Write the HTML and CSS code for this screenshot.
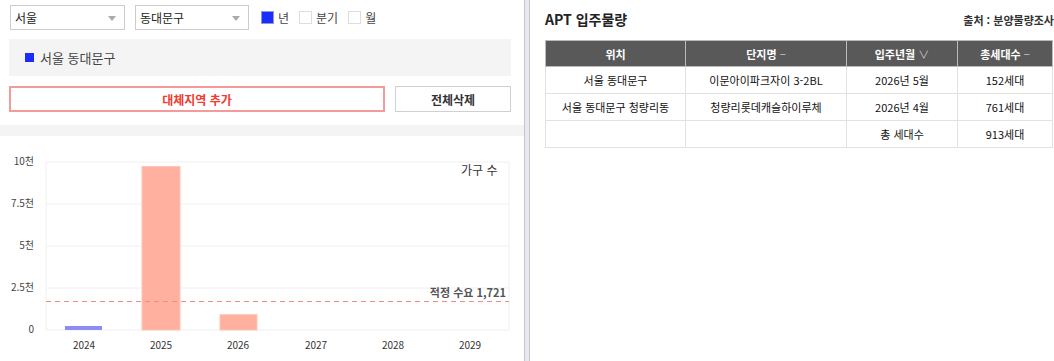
FILE: index.html
```html
<!DOCTYPE html>
<html lang="ko">
<head>
    <meta charset="UTF-8">
    <meta name="viewport" content="width=device-width, initial-scale=1.0">
    <title>APT 입주물량</title>
    <link rel="stylesheet" href="styles.css">
</head>
<body>
<div class="page">
    <section class="left-panel">
        <div class="filters">
            <div class="select select-city">서울<span class="caret"></span></div>
            <div class="select select-gu">동대문구<span class="caret"></span></div>
            <label class="check checked"><span class="box"></span>년</label>
            <label class="check"><span class="box"></span>분기</label>
            <label class="check"><span class="box"></span>월</label>
        </div>

        <div class="legend">
            <span class="swatch"></span>서울 동대문구
        </div>

        <div class="actions">
            <button type="button" class="btn-add">대체지역 추가</button>
            <button type="button" class="btn-clear">전체삭제</button>
        </div>

        <div class="band"></div>

        <div class="chart">
            <svg width="524" height="225" viewBox="0 0 524 225">
                <g class="grid">
                    <line x1="46" y1="26" x2="509" y2="26"/>
                    <line x1="46" y1="68" x2="509" y2="68"/>
                    <line x1="46" y1="110" x2="509" y2="110"/>
                    <line x1="46" y1="152" x2="509" y2="152"/>
                    <line x1="46" y1="194" x2="509" y2="194"/>
                    <line x1="46" y1="26" x2="46" y2="194"/>
                    <line x1="509" y1="26" x2="509" y2="194"/>
                </g>
                <g class="y-labels">
                    <text x="34" y="26">10천</text>
                    <text x="34" y="68">7.5천</text>
                    <text x="34" y="110">5천</text>
                    <text x="34" y="152">2.5천</text>
                    <text x="34" y="194">0</text>
                </g>
                <rect class="bar-past" x="65" y="190" width="37" height="4"/>
                <rect class="bar" x="142" y="30.5" width="38" height="163.5"/>
                <rect class="bar" x="220" y="178.7" width="37" height="15.3"/>
                <line class="need-line" x1="46" y1="165.5" x2="509" y2="165.5"/>
                <text class="need-label" x="506" y="158">적정 수요 1,721</text>
                <text class="series-label" x="461" y="36">가구 수</text>
                <g class="x-labels">
                    <text x="84" y="210">2024</text>
                    <text x="161" y="210">2025</text>
                    <text x="238" y="210">2026</text>
                    <text x="316" y="210">2027</text>
                    <text x="393" y="210">2028</text>
                    <text x="470" y="210">2029</text>
                </g>
            </svg>
        </div>
    </section>

    <div class="splitter"></div>

    <section class="right-panel">
        <div class="panel-head">
            <h2 class="title">APT 입주물량</h2>
            <span class="source">출처 : 분양물량조사</span>
        </div>
        <table class="supply">
            <colgroup>
                <col class="c-loc">
                <col class="c-name">
                <col class="c-date">
                <col class="c-units">
            </colgroup>
            <thead>
                <tr>
                    <th>위치</th>
                    <th>단지명 <span class="sort">−</span></th>
                    <th>입주년월 <span class="sort">∨</span></th>
                    <th>총세대수 <span class="sort">−</span></th>
                </tr>
            </thead>
            <tbody>
                <tr>
                    <td>서울 동대문구</td>
                    <td>이문아이파크자이 3-2BL</td>
                    <td>2026년 5월</td>
                    <td>152세대</td>
                </tr>
                <tr>
                    <td>서울 동대문구 청량리동</td>
                    <td>청량리롯데캐슬하이루체</td>
                    <td>2026년 4월</td>
                    <td>761세대</td>
                </tr>
                <tr>
                    <td></td>
                    <td></td>
                    <td>총 세대수</td>
                    <td>913세대</td>
                </tr>
            </tbody>
        </table>
    </section>
</div>
</body>
</html>
```

FILE: styles.css
```css
body {
    margin: 0;
    background-color: #fff;
    font-family: "Noto Sans CJK KR", "Noto Sans", sans-serif;
    color: #333;
}

.page {
    display: flex;
    width: 1054px;
    height: 361px;
    overflow: hidden;
}

/* left side */
.left-panel {
    width: 524px;
    flex: none;
}

.filters {
    display: flex;
    align-items: center;
    height: 25px;
    padding: 5px 0 0 10px;
}

.select {
    position: relative;
    box-sizing: border-box;
    height: 25px;
    padding-left: 4px;
    border: 1px solid #ccc;
    font-size: 12px;
    line-height: 23px;
    color: #222;
}

.select-city {
    width: 115px;
    margin-right: 10px;
}

.select-gu {
    width: 114px;
    margin-right: 12px;
}

.caret {
    position: absolute;
    right: 8px;
    top: 10px;
    border-left: 4px solid transparent;
    border-right: 4px solid transparent;
    border-top: 5px solid #aaa;
}

.check {
    display: flex;
    align-items: center;
    margin-right: 10px;
    font-size: 12px;
    color: #444;
}

.check .box {
    box-sizing: border-box;
    width: 13px;
    height: 13px;
    margin-right: 4px;
    border: 1px solid #ddd;
    background-color: #fff;
}

.check.checked .box {
    border-color: #8d98d8;
    background-color: #1a2cff;
}

.legend {
    display: flex;
    align-items: center;
    height: 37px;
    margin: 9px 13px 0 9px;
    padding-left: 16px;
    background-color: #f4f4f4;
    font-size: 13px;
    color: #444;
}

.swatch {
    width: 9px;
    height: 9px;
    margin-right: 6px;
    background-color: #1a2cff;
}

.actions {
    display: flex;
    gap: 10px;
    margin: 10px 13px 0 9px;
}

.actions button {
    height: 26px;
    padding: 0;
    background-color: #fff;
    font-family: inherit;
    font-size: 12px;
    font-weight: bold;
    cursor: pointer;
}

.btn-add {
    width: 376px;
    border: 2px solid #f59a9a;
    color: #f03a32;
}

.btn-clear {
    flex: 1;
    border: 1px solid #d0d0d0;
    color: #333;
}

.band {
    height: 11px;
    margin-top: 13px;
    background-color: #f4f4f4;
}

.chart svg {
    display: block;
}

.grid line {
    stroke: #f0f0f0;
    stroke-width: 1;
}

.y-labels text {
    font-size: 10px;
    fill: #444;
    text-anchor: end;
    dominant-baseline: middle;
}

.x-labels text {
    font-size: 10px;
    fill: #333;
    text-anchor: middle;
    dominant-baseline: middle;
}

.bar {
    fill: #ffb09f;
    stroke: #ffc4b8;
    stroke-width: 1;
}

.bar-past {
    fill: #8c8cf5;
}

.need-line {
    stroke: #f28a8a;
    stroke-width: 1;
    stroke-dasharray: 5 4;
}

.need-label {
    font-size: 11px;
    font-weight: bold;
    fill: #555;
    text-anchor: end;
    dominant-baseline: middle;
}

.series-label {
    font-size: 12px;
    fill: #333;
    dominant-baseline: middle;
}

/* drag bar between the two panels */
.splitter {
    box-sizing: border-box;
    width: 6px;
    flex: none;
    border-left: 1px solid #c4c4cc;
    border-right: 1px solid #c4c4cc;
    background-color: #e8e8ee;
}

/* right side */
.right-panel {
    flex: 1;
    padding: 0 2px 0 15px;
}

.panel-head {
    display: flex;
    justify-content: space-between;
    align-items: flex-end;
    height: 28px;
    margin-bottom: 12px;
}

.title {
    margin: 0;
    font-size: 14px;
    font-weight: bold;
    color: #222;
    line-height: 18px;
}

.source {
    margin-right: -1px;
    font-size: 11px;
    font-weight: bold;
    color: #333;
    line-height: 16px;
}

.supply {
    width: 507px;
    border-collapse: collapse;
    table-layout: fixed;
    font-size: 11px;
}

.c-loc { width: 140px; }
.c-name { width: 161px; }
.c-date { width: 111px; }
.c-units { width: 95px; }

.supply th {
    height: 25px;
    padding: 0;
    border: 1px solid #bbb;
    background-color: #595959;
    color: #fff;
    font-weight: bold;
}

.supply th .sort {
    font-weight: normal;
    color: #c8c8c8;
}

.supply td {
    height: 26px;
    padding: 0;
    border: 1px solid #e2e2e2;
    text-align: center;
    color: #111;
}
```
